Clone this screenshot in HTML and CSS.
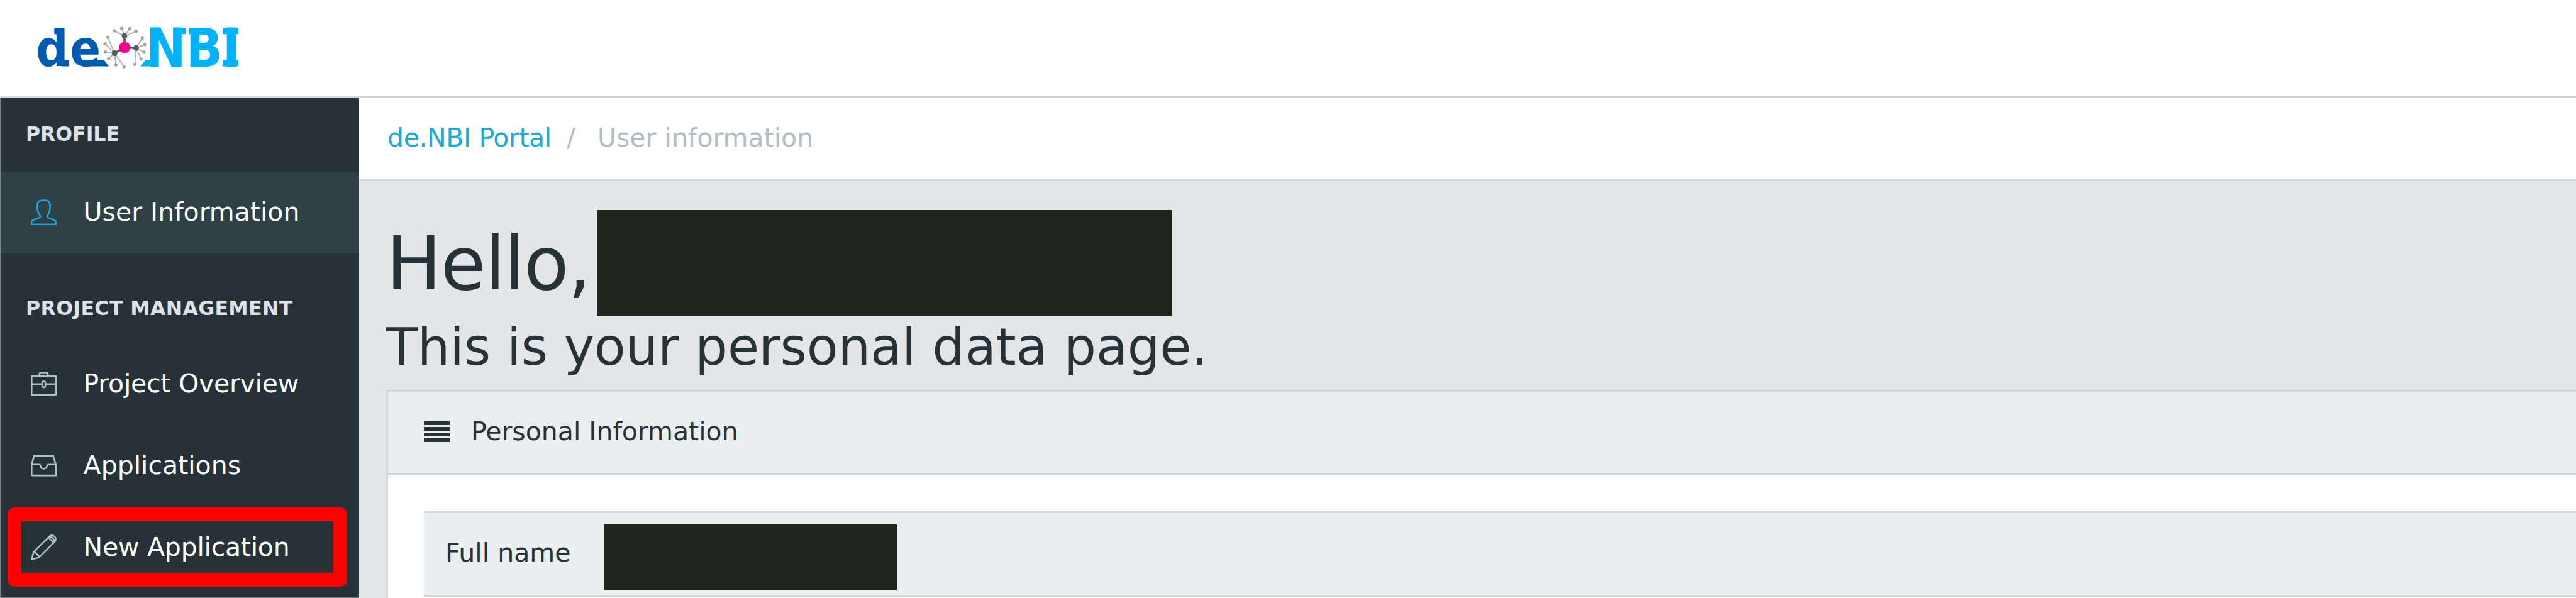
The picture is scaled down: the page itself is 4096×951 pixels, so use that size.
FILE: index.html
```html
<!DOCTYPE html>
<html lang="en">
<head>
<meta charset="utf-8">
<title>de.NBI Portal</title>
<link rel="stylesheet" href="styles.css">
</head>
<body>
<header class="topbar">
  <svg class="logo" viewBox="0 0 400 152" role="img" aria-label="de.NBI">
    <g class="logo-de">
      <text x="57" y="105.400" font-size="80" textLength="103">de</text>
      <path d="M86.300 44.200h10v10h-10zM98 95.800h11.500v9.800h-11.500zM134 95.800h31.800l7.200 9.800h-39z"/>
    </g>
    <g class="logo-nbi">
      <text x="232" y="105.600" font-size="84.600" textLength="150">NBI</text>
      <path d="M284 44h11.300v10.300h-11.300zM300.900 44h12v10.300h-12zM354 44h24.600v10.300h-24.600zM354 95.600h24.600v10h-24.600zM222.800 105.600l8.500-9.800h12v9.800z"/>
    </g>
    <g transform="translate(138.8 23.1) scale(.257)">
      <path class="logo-twigs" d="M230 133L168 101M230 133L213 86M230 133L263 87M230 133L302 104M302 207L340 146M302 207L355 186M302 207L351 233M302 207L333 275M302 207L294 308M169 239L128 141M169 239L110 181M169 239L112 232M169 239L132 273M169 239L177 312M169 239L228 324"/>
      <path class="logo-leaves" d="M168 101h0M213 86h0M263 87h0M302 104h0M340 146h0M355 186h0M351 233h0M333 275h0M294 308h0M128 141h0M110 181h0M112 232h0M132 273h0M177 312h0M228 324h0"/>
      <path class="logo-spokes" d="M231 204L230 133M231 204L302 207M231 204L169 239"/>
      <path class="logo-hubs" d="M230 133h0M302 207h0M169 239h0"/>
      <circle class="logo-core" cx="231" cy="204" r="35"/>
    </g>
  </svg>
</header>
<div class="layout">
  <nav class="sidebar">
    <h2 class="nav-title nav-title-first">PROFILE</h2>
    <a class="nav-item active">
      <svg class="icon" viewBox="0 0 16 16"><path d="M6.700 .6H9.300C11 1 12 2.200 12 4C12 6.200 11.800 7.700 11 8.900C10.300 9.800 10 10.200 10.200 10.800C10.500 11.600 11.600 11.700 12.600 12.100C14.300 12.700 15.500 13 15.500 14V15.500H.5V14C.5 13 1.700 12.700 3.400 12.100C4.400 11.700 5.500 11.600 5.800 10.800C6 10.200 5.700 9.800 5 8.900C4.200 7.700 4 6.200 4 4C4 2.200 5 1 6.700 .6Z"/></svg>
      <span>User Information</span>
    </a>
    <h2 class="nav-title">PROJECT MANAGEMENT</h2>
    <a class="nav-item tight">
      <svg class="icon" viewBox="0 0 16 16"><path d="M.5 2.800H15.500V14.300H.5ZM5.400 2.800V1.600Q5.400 .6 6.400 .6H9.600Q10.600 .6 10.600 1.600V2.800M.5 7.700H7M9 7.700H15.500M8 6A1 1 0 0 1 9 7V8.800A1 1 0 0 1 7 8.800V7A1 1 0 0 1 8 6Z"/></svg>
      <span>Project Overview</span>
    </a>
    <a class="nav-item">
      <svg class="icon" viewBox="0 0 16 16"><path d="M2.100 1.800H13.900L15.500 7.300V14.100H.5V7.300ZM.5 7.300H5.200C5.700 7.300 5.900 7.700 6 8.200C6.200 9.300 7 9.900 8 9.900S9.800 9.300 10 8.200C10.100 7.700 10.300 7.300 10.800 7.300H15.500"/></svg>
      <span>Applications</span>
    </a>
    <a class="nav-item tight marked">
      <svg class="icon" viewBox="0 0 16 16"><path d="M.6 15.400L1.700 10.900L11.500 1.200C12.500 .2 13.900 .4 14.700 1.300C15.600 2.100 15.800 3.500 14.800 4.500L5.100 14.300ZM1.700 10.900L2.600 11L5 13.400L5.100 14.300M10.900 1.800L14.200 5.100M12 1.500Q14.300 2 14.500 4.200"/></svg>
      <span>New Application</span>
    </a>
  </nav>
  <main class="main">
    <ol class="breadcrumb">
      <li class="crumb-link">de.NBI Portal</li>
      <li class="crumb-sep">/</li>
      <li>User information</li>
    </ol>
    <div class="content">
      <div class="greeting"><h1>Hello,</h1><span class="redacted redacted-title"></span></div>
      <p class="lead">This is your personal data page.</p>
      <section class="card">
        <div class="card-header">
          <svg class="justify" viewBox="0 0 41 33"><path d="M0 0h41v6H0zM0 9h41v6H0zM0 18h41v6H0zM0 27h41v6H0z"/></svg>
          <span>Personal Information</span>
        </div>
        <div class="card-body">
          <div class="row">
            <span class="row-label">Full name</span>
            <span class="redacted redacted-name"></span>
          </div>
        </div>
      </section>
    </div>
  </main>
</div>
</body>
</html>
```
FILE: styles.css
```css
*, *::after { box-sizing: border-box; }
body {
  margin: 0;
  height: 951px;
  overflow: hidden;
  display: flex;
  flex-direction: column;
  background: #e4e5e6;
  color: #263238;
  font: 41px/1.2 "DejaVu Sans", sans-serif;
}
h1, h2, p, ol { margin: 0; padding: 0; font-weight: 400; }

.topbar {
  flex: none;
  height: 156px;
  background: #fff;
  border-bottom: 3px solid #cfd8dc;
}
.logo { display: block; width: 400px; height: 152px; }
.logo text {
  font-family: "DejaVu Sans Condensed", "DejaVu Sans", sans-serif;
  font-stretch: condensed;
  font-weight: 700;
}
.logo-de { fill: #005cb1; }
.logo-nbi { fill: #00b2f6; }
.logo path { stroke-linecap: round; }
.logo-twigs { stroke: #b0b0b2; stroke-width: 7; }
.logo-leaves { stroke: #a6a6a8; stroke-width: 21; }
.logo-spokes { stroke: #55565a; stroke-width: 14; }
.logo-hubs { stroke: #5a5b5e; stroke-width: 35; }
.logo-core { fill: #f2008f; }

.layout { flex: 1; min-height: 0; display: flex; }

.sidebar {
  flex: none;
  width: 571px;
  height: 795px;
  overflow: hidden;
  background: #263238;
  border-left: 1px solid #7b8488;
  border-bottom: 1px solid #6d7679;
  color: #fff;
}
.nav-title {
  height: 144px;
  padding: 31px 0 0 40px;
  display: flex;
  align-items: center;
  color: #dfe2e4;
  font-size: 31.500px;
  font-weight: 700;
  letter-spacing: .4px;
}
.nav-title-first { height: 117.500px; padding-top: 0; padding-bottom: 2px; letter-spacing: 0; }
.nav-item {
  height: 129.700px;
  padding: 0 0 2px 47.600px;
  display: flex;
  align-items: center;
  gap: 43px;
}
.nav-item.active { background: #2f4047; }
.nav-item.tight { letter-spacing: -.25px; }
.icon {
  width: 41px;
  height: 41px;
  fill: none;
  stroke: #b0bec5;
  stroke-width: 1;
}
.active .icon { stroke: #20a8d8; }
.marked { position: relative; }
.marked::after {
  content: "";
  position: absolute;
  left: 11px;
  top: 0;
  width: 540px;
  height: 126.500px;
  border: 22px solid #f00;
  border-radius: 11px;
}

.main { flex: 1; min-width: 0; height: 795px; overflow: hidden; }
.breadcrumb {
  height: 132px;
  padding: 0 0 2px 45px;
  display: flex;
  align-items: center;
  list-style: none;
  background: #fff;
  border-bottom: 3px solid #cfd8dc;
  color: #b0bec5;
}
.crumb-link { width: 285px; color: #20a8d8; letter-spacing: -.4px; }
.crumb-sep { width: 49px; }

.content { padding: 45.600px 0 0 43px; }
.greeting { height: 169px; display: flex; align-items: center; }
h1 { width: 335px; padding: 4px 0 0 0; font-size: 117px; letter-spacing: -1.500px; }
.redacted { background: #20251e; }
.redacted-title { width: 914px; height: 169px; }
.lead { margin-bottom: 20px; font-size: 81.500px; line-height: 97px; letter-spacing: -.1px; }

.card {
  height: 332px;
  background: #fff;
  border: 3px solid #cfd8dc;
  border-right: 0;
  border-bottom: 0;
}
.card-header {
  height: 132px;
  padding: 0 0 1px 57px;
  display: flex;
  align-items: center;
  gap: 34px;
  background: #eaeef1;
  border-bottom: 3px solid #cfd8dc;
}
.justify { width: 41px; height: 33px; fill: #263238; }
.card-body { padding: 58px 0 0 57px; }
.row {
  height: 136px;
  padding: 0 0 0 34px;
  display: flex;
  align-items: center;
  background: #eaeef1;
  border-top: 3px solid #cfd8dc;
  border-bottom: 3px solid #cfd8dc;
}
.row-label { width: 252px; padding-bottom: 2px; }
.redacted-name { width: 466px; height: 105px; margin-top: 12px; }
```
